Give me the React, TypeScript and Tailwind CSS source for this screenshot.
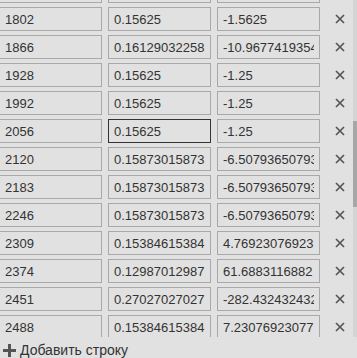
import { useState } from "react";

const rows = [
  ["1738", "0.15625", "-1.5625"],
  ["1802", "0.15625", "-1.5625"],
  ["1866", "0.16129032258", "-10.9677419354839"],
  ["1928", "0.15625", "-1.25"],
  ["1992", "0.15625", "-1.25"],
  ["2056", "0.15625", "-1.25"],
  ["2120", "0.15873015873", "-6.50793650793651"],
  ["2183", "0.15873015873", "-6.50793650793651"],
  ["2246", "0.15873015873", "-6.50793650793651"],
  ["2309", "0.15384615384", "4.76923076923"],
  ["2374", "0.12987012987", "61.6883116882"],
  ["2451", "0.27027027027", "-282.432432432432"],
  ["2488", "0.15384615384", "7.23076923077"],
];

function Cross() {
  return (
    <svg width="10" height="10" viewBox="0 0 10 10">
      <path d="M1 1L9 9M9 1L1 9" stroke="#555" strokeWidth="1.7" />
    </svg>
  );
}

export default function App() {
  const [data] = useState(rows);

  return (
    <div className="w-[357px] h-[358px] overflow-hidden bg-[#e1e1e1] font-['Liberation_Sans',Arial,sans-serif] text-[13px] text-[#333]">
      <div className="flex h-[337px]">
        <div className="flex-1 overflow-hidden">
          <div className="-mt-[21px] -ml-px flex flex-col gap-1">
            {data.map((row, i) => (
              <div key={i} className="flex items-center gap-[6px]">
                {row.map((v, j) => (
                  <input
                    key={j}
                    defaultValue={v}
                    readOnly
                    className={
                      "w-[103px] h-6 shrink-0 bg-transparent px-[5px] outline-none border " +
                      (i === 5 && j === 1 ? "border-[#333]" : "border-[#a8a8a8]")
                    }
                  />
                ))}
                <button className="w-[32px] flex justify-center items-center">
                  <Cross />
                </button>
              </div>
            ))}
          </div>
        </div>
        <div className="w-1 bg-[#d4d4d4] pt-[121px]">
          <div className="h-[86px] bg-[#a6a6a6]" />
        </div>
      </div>
      <div className="flex items-center gap-[4px] pl-[3px] pt-[5px]">
        <svg width="13" height="13" viewBox="0 0 13 13">
          <path d="M6.5 0V13M0 6.5H13" stroke="#555" strokeWidth="3" />
        </svg>
        <span className="text-[14px] leading-[16px]">Добавить строку</span>
      </div>
    </div>
  );
}
